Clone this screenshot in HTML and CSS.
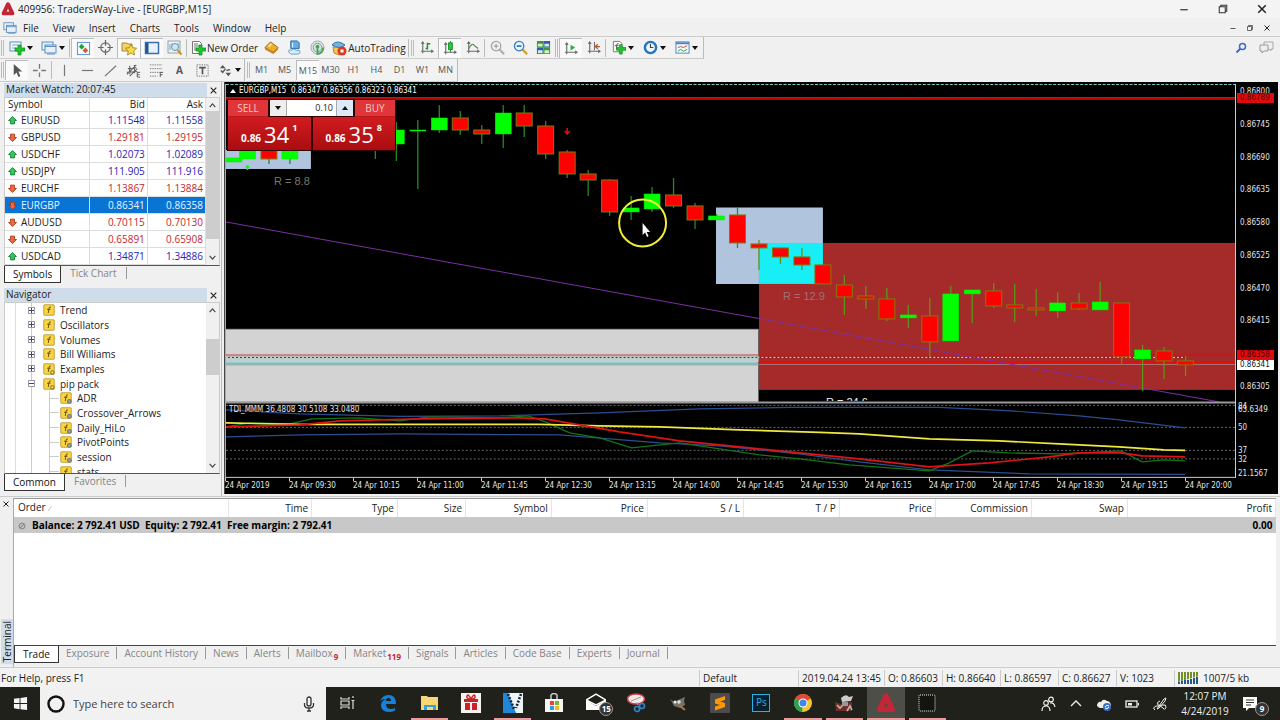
FILE: index.html
```html
<!DOCTYPE html>
<html lang="en">
<head>
<meta charset="utf-8">
<title>409956: TradersWay-Live - [EURGBP,M15]</title>
<link rel="stylesheet" href="styles.css">
</head>
<body>
<svg class="defs" aria-hidden="true">
  <symbol id="logo" viewBox="0 0 16 16"><path d="M8 2.500 13 13H3z" fill="none" stroke="#c22738" stroke-width="4.500" stroke-linejoin="round"/></symbol>
  <symbol id="plus" viewBox="0 0 16 16"><path d="M9 5h3v3h4v3h-4v4H9v-4H6V8h3z" fill="#1fc52b" stroke="#0a8a18" stroke-width=".7"/></symbol>
  <symbol id="new-chart" viewBox="0 0 16 16"><rect x="1" y="2" width="11" height="9" fill="#f3f8fc" stroke="#5a8fc0"/><path d="M3 5h6M3 8h4" stroke="#7ba6cc"/><use href="#plus"/></symbol>
  <symbol id="profiles" viewBox="0 0 16 16"><rect x="1" y="2" width="11" height="8" fill="#e8f1f9" stroke="#5a8fc0"/><rect x="4" y="5" width="11" height="8" fill="#e8f1f9" stroke="#5a8fc0"/><path d="M4 6.500h11M6 14h8" stroke="#5a8fc0"/></symbol>
  <symbol id="watch" viewBox="0 0 16 16"><rect x="1.500" y="1.500" width="13" height="13" fill="#f6fbff" stroke="#4f92c6"/><path d="m6 3 3 3-3 3-3-3z" fill="#18aa35"/><path d="m10 7 3 3-3 3-3-3z" fill="#e2582a"/></symbol>
  <symbol id="target" viewBox="0 0 16 16"><g fill="none" stroke="#666" stroke-width="1.300"><circle cx="8" cy="8" r="5"/><path d="M8 0v6M8 10v6M0 8h6M10 8h6"/></g></symbol>
  <symbol id="star" viewBox="0 0 16 16"><path d="M1 3h5l1 1h4v7H1z" fill="#f3d36a" stroke="#a98934"/><path d="m10 4 1.700 3.700 4 .5-3 2.800.8 4L10 13l-3.500 2 .8-4-3-2.800 4-.5z" fill="#ffdb4a" stroke="#a07a18" stroke-width=".8"/></symbol>
  <symbol id="panel" viewBox="0 0 16 16"><rect x="1.500" y="2.500" width="13" height="11" fill="#e9f1fa" stroke="#3971ae" stroke-width="1.500"/><path d="M3 3v10" stroke="#215796" stroke-width="3"/></symbol>
  <symbol id="tester" viewBox="0 0 16 16"><rect x="1" y="1" width="12" height="12" fill="#f0f3f5" stroke="#8da2b0"/><path d="M3 10V4M5 8V3m6 5V3" stroke="#7aa"/><circle cx="8" cy="7" r="3.500" fill="#cde6f7" stroke="#6e91ad"/><path d="m10.500 10 4 4.500" stroke="#c89423" stroke-width="2"/></symbol>
  <symbol id="order" viewBox="0 0 16 16"><path d="M2.500 1.500h7l2 2v10h-9z" fill="#fafafa" stroke="#777"/><path d="M4 4h4M4 6h5M4 8h3M4 10h2" stroke="#777"/><use href="#plus"/></symbol>
  <symbol id="book" viewBox="0 0 16 16"><path d="m1 8 6-6 8 6-5 6z" fill="#e8af33" stroke="#9c6b12"/><path d="m1 8 9 4 5-4v2l-5 5-9-5z" fill="#c5851b"/><path d="m5 7 3-3" stroke="#ffe39a" stroke-width="2"/></symbol>
  <symbol id="server" viewBox="0 0 16 16"><path d="M4 1h7l2 2v6H4z" fill="#65afe8" stroke="#256da9"/><path d="M6 3v5" stroke="#fff"/><path d="M3 14q-2-1-1-3 2-1 3 0 2-3 5 0 4-1 4 2 0 2-3 2H4z" fill="#dceefa" stroke="#569ccd"/></symbol>
  <symbol id="signal" viewBox="0 0 16 16"><circle cx="8" cy="8" r="7" fill="#dde4e4" stroke="#9caaaa"/><circle cx="8" cy="8" r="4.500" fill="none" stroke="#7d9aa0"/><circle cx="8" cy="7" r="2" fill="#45a756"/><path d="M8 8v7q6-1 6-7" fill="none" stroke="#45a756" stroke-width="2"/></symbol>
  <symbol id="auto" viewBox="0 0 16 16"><path d="M2 7h11l-1 6-4 2-5-2z" fill="#f3c84d" stroke="#b8872b"/><path d="M1 5q5-6 13 0-5 5-13 0" fill="#6cb5e5" stroke="#3777a9"/><circle cx="11" cy="11" r="4.500" fill="#d83a24"/><rect x="9.500" y="9.500" width="3" height="3" fill="#fff"/></symbol>
  <symbol id="axes" viewBox="0 0 16 16"><path d="M4 2v12M2 12h13M2.500 4 4 2l1.500 2M13 10.500l2 1.500-2 1.500" fill="none" stroke="#6a6a6a" stroke-width="1.200"/></symbol>
  <symbol id="bars" viewBox="0 0 16 16"><use href="#axes"/><path d="M9 3v7M7 9h2m0-5h3" stroke="#189432" stroke-width="1.600"/></symbol>
  <symbol id="candles" viewBox="0 0 16 16"><use href="#axes"/><path d="M9 0v12" stroke="#178f2b"/><rect x="7" y="2" width="4" height="7" fill="#20cf3b" stroke="#178f2b"/></symbol>
  <symbol id="line" viewBox="0 0 16 16"><use href="#axes"/><path d="M4 9q4-7 6-3l4 3" fill="none" stroke="#57804e" stroke-width="1.200"/></symbol>
  <symbol id="zoom-in" viewBox="0 0 16 16"><path d="m10 10 5 5" stroke="#b3b3b3" stroke-width="2.500"/><circle cx="6.500" cy="6.500" r="5" fill="#f4f4f4" stroke="#a2a2a2" stroke-width="1.400"/><path d="M4 6.500h5M6.500 4v5" stroke="#a2a2a2" stroke-width="1.400"/></symbol>
  <symbol id="zoom-out" viewBox="0 0 16 16"><path d="m10 10 5 5" stroke="#d5a42c" stroke-width="2.500"/><circle cx="6.500" cy="6.500" r="5" fill="#e3f4ff" stroke="#367bbd" stroke-width="1.400"/><path d="M4 6.500h5" stroke="#265e9c" stroke-width="1.600"/></symbol>
  <symbol id="tiles" viewBox="0 0 16 16"><path d="M1 1h7v7H1zM8 8h7v7H8z" fill="#3d973a"/><path d="M8 1h7v7H8zM1 8h7v7H1z" fill="#2860b7"/><path d="M2 4h5v3H2zm7 0h5v3H9zM2 11h5v3H2zm7 0h5v3H9z" fill="#d9efc9"/></symbol>
  <symbol id="scroll" viewBox="0 0 16 16"><use href="#axes"/><path d="m8 4 5 3-5 3z" fill="#22b43a"/></symbol>
  <symbol id="shift" viewBox="0 0 16 16"><use href="#axes"/><path d="M9 2v9" stroke="#5c5c5c"/><path d="M9 7h6M12.500 4.500 10 7l2.500 2.500" fill="none" stroke="#b5562d" stroke-width="1.400"/></symbol>
  <symbol id="indicator" viewBox="0 0 16 16"><path d="M2.500 1.500h7l2 2v9h-9z" fill="#fafafa" stroke="#777"/><path d="M8 4q-2-1-2 2v4M4 6h4" fill="none" stroke="#555"/><use href="#plus"/></symbol>
  <symbol id="clock" viewBox="0 0 16 16"><circle cx="8" cy="8" r="6" fill="#eef7ff" stroke="#2874bb" stroke-width="2.600"/><path d="M8 4v4h3" fill="none" stroke="#345" stroke-width="1.200"/></symbol>
  <symbol id="template" viewBox="0 0 16 16"><rect x="1" y="2" width="14" height="12" fill="#f4f9fd" stroke="#4787bf"/><path d="M1 3.500h14" stroke="#4787bf" stroke-width="2"/><path d="m3 8 3-1 3 1 4-2" fill="none" stroke="#b64b35"/><path d="m3 12 3-2 3 2 4-2" fill="none" stroke="#369a3d"/></symbol>
  <symbol id="cursor" viewBox="0 0 16 16"><path d="M4 1v12l3-3 2 5 2-1-2-5h4z" fill="#555"/></symbol>
  <symbol id="cross" viewBox="0 0 16 16"><path d="M8 1v5M8 10v5M1 8h5M10 8h5" stroke="#777" stroke-width="1.400"/></symbol>
  <symbol id="vline" viewBox="0 0 16 16"><path d="M8 2v12" stroke="#777" stroke-width="1.300"/></symbol>
  <symbol id="hline" viewBox="0 0 16 16"><path d="M2 8h12" stroke="#777" stroke-width="1.300"/></symbol>
  <symbol id="trend" viewBox="0 0 16 16"><path d="M2 14 14 3" stroke="#777" stroke-width="1.300"/></symbol>
  <symbol id="channel" viewBox="0 0 16 16"><path d="M1 12 11 2M4 14l8-8M2 6l9-1M1 10l11-1M4 3v9m5-10v9" stroke="#666" stroke-width="1.200"/><path d="M15 10h-3v5h3m-3-2.500h2.500" fill="none" stroke="#555"/></symbol>
  <symbol id="fibo" viewBox="0 0 16 16"><path d="M1 2h13M1 6h13M1 10h13M1 14h8" stroke="#777" stroke-dasharray="1.500 1"/><path d="M15 10h-3v5m0-2.500h2.500" fill="none" stroke="#555"/></symbol>
  <symbol id="frame" viewBox="0 0 16 16"><rect x="2" y="2" width="12" height="12" fill="none" stroke="#777" stroke-dasharray="1.500 1"/><path d="M4.500 5h7M8 5v7" stroke="#555" stroke-width="1.800"/></symbol>
  <symbol id="arrows" viewBox="0 0 16 16"><path d="m5 2 3 3.500H2zM11 14l-3-3.500h6z" fill="#555"/><path d="m3 8 2 2 3-4M9 8l4-1" fill="none" stroke="#555" stroke-width="1.500"/></symbol>
  <symbol id="up" viewBox="0 0 16 16"><path d="m8 1 7 7h-3.500v6h-7V8H1z" fill="#35c95a" stroke="#0b7c2b" stroke-width="1.500"/></symbol>
  <symbol id="down" viewBox="0 0 16 16"><path d="m8 15 7-7h-3.500V2h-7v6H1z" fill="#f0683f" stroke="#a9320c" stroke-width="1.500"/></symbol>
  <symbol id="fx" viewBox="0 0 16 16"><rect x="1" y="1" width="14" height="14" rx="1" fill="#f8d545" stroke="#b08a1a"/><path d="M10.500 4Q8.500 3 8 6l-1 6M5.500 7h4.500" fill="none" stroke="#6a4f0c" stroke-width="1.300"/></symbol>
  <symbol id="fxg" viewBox="0 0 16 16"><use href="#fx"/><circle cx="12.500" cy="12.500" r="2.300" fill="#f5df7c" stroke="#91701a" stroke-width="1.400"/></symbol>
  <symbol id="fxc" viewBox="0 0 16 16"><use href="#fx"/><circle cx="12.500" cy="12.500" r="2.600" fill="#999" stroke="#777" stroke-width="1.400"/></symbol>
  <symbol id="min" viewBox="0 0 16 16"><path d="M3 9h10" stroke="#333" stroke-width="1.600"/></symbol>
  <symbol id="restore" viewBox="0 0 16 16"><path d="M3 5h8v8H3zM5 5V3h8v8h-2" fill="none" stroke="#333" stroke-width="1.400"/></symbol>
  <symbol id="close" viewBox="0 0 16 16"><path d="m3 3 10 10M13 3 3 13" stroke="#222" stroke-width="2"/></symbol>
  <symbol id="chev-up" viewBox="0 0 16 16"><path d="m3 11 5-6 5 6" fill="none" stroke="#444" stroke-width="2"/></symbol>
  <symbol id="chev-down" viewBox="0 0 16 16"><path d="m3 5 5 6 5-6" fill="none" stroke="#444" stroke-width="2"/></symbol>
</svg>

<header class="titlebar">
  <svg class="i14"><use href="#logo"/></svg><span class="grow">409956: TradersWay-Live - [EURGBP,M15]</span>
  <button class="win" aria-label="Minimize"><svg class="i12"><use href="#min"/></svg></button>
  <button class="win" aria-label="Restore"><svg class="i12"><use href="#restore"/></svg></button>
  <button class="win" aria-label="Close"><svg class="i12"><use href="#close"/></svg></button>
</header>
<nav class="menubar">
  <svg class="i14"><use href="#profiles"/></svg>
  <button>File</button><button>View</button><button>Insert</button><button>Charts</button><button>Tools</button><button>Window</button><button>Help</button>
  <span class="grow"></span>
  <button class="child" aria-label="Minimize chart"><svg class="i8"><use href="#min"/></svg></button>
  <button class="child" aria-label="Restore chart"><svg class="i8"><use href="#restore"/></svg></button>
  <button class="child" aria-label="Close chart"><svg class="i8"><use href="#close"/></svg></button>
</nav>
<div class="toolbar">
  <div class="band">
    <i class="grip"></i>
    <button class="drop" aria-label="New chart"><svg class="i16"><use href="#new-chart"/></svg><i class="caret"></i></button>
    <button class="drop" aria-label="Profiles"><svg class="i16"><use href="#profiles"/></svg><i class="caret"></i></button>
    <i class="sep"></i>
    <button class="tool on" aria-label="Market Watch"><svg class="i15"><use href="#watch"/></svg></button>
    <button class="tool" aria-label="Data Window"><svg class="i15"><use href="#target"/></svg></button>
    <button class="tool on" aria-label="Navigator"><svg class="i16"><use href="#star"/></svg></button>
    <button class="tool on" aria-label="Terminal"><svg class="i16"><use href="#panel"/></svg></button>
    <button class="tool" aria-label="Strategy Tester"><svg class="i16"><use href="#tester"/></svg></button>
    <i class="sep"></i>
    <button class="wide"><svg class="i16"><use href="#order"/></svg>New Order</button>
    <button class="tool" aria-label="MetaEditor"><svg class="i15"><use href="#book"/></svg></button>
    <button class="tool" aria-label="Hosting"><svg class="i15"><use href="#server"/></svg></button>
    <button class="tool" aria-label="Signals"><svg class="i15"><use href="#signal"/></svg></button>
    <button class="wide"><svg class="i16"><use href="#auto"/></svg>AutoTrading</button>
    <i class="sep"></i><i class="grip thin"></i>
    <button class="tool" aria-label="Bar Chart"><svg class="i15"><use href="#bars"/></svg></button>
    <button class="tool on" aria-label="Candlesticks"><svg class="i15"><use href="#candles"/></svg></button>
    <button class="tool" aria-label="Line Chart"><svg class="i15"><use href="#line"/></svg></button>
    <i class="sep"></i>
    <button class="tool" aria-label="Zoom In"><svg class="i15"><use href="#zoom-in"/></svg></button>
    <button class="tool" aria-label="Zoom Out"><svg class="i15"><use href="#zoom-out"/></svg></button>
    <button class="tool" aria-label="Tile Windows"><svg class="i15"><use href="#tiles"/></svg></button>
    <i class="sep"></i><i class="sep"></i>
    <button class="tool on" aria-label="Auto Scroll"><svg class="i15"><use href="#scroll"/></svg></button>
    <button class="tool" aria-label="Chart Shift"><svg class="i15"><use href="#shift"/></svg></button>
    <i class="sep"></i>
    <button class="drop" aria-label="Indicators"><svg class="i15"><use href="#indicator"/></svg><i class="caret"></i></button>
    <button class="drop" aria-label="Periods"><svg class="i15"><use href="#clock"/></svg><i class="caret"></i></button>
    <button class="drop" aria-label="Templates"><svg class="i15"><use href="#template"/></svg><i class="caret"></i></button>
  </div>
  <span class="grow"></span>
  <button class="side" aria-label="Search"><svg class="i12" viewBox="0 0 16 16"><circle cx="10" cy="6" r="4" fill="#eef" stroke="#3c6cc4" stroke-width="2"/><path d="m7 9-5 5" stroke="#3c6cc4" stroke-width="2.500"/></svg></button>
  <button class="side" aria-label="Chat"><svg class="i16" viewBox="0 0 16 16"><path d="M5 2h9v7h-2v2l-2-2H5z" fill="#eee" stroke="#aaa"/><path d="M1 5h8v6H5l-2 2v-2H1z" fill="#eee" stroke="#999"/></svg></button>
</div>
<div class="toolbar">
  <div class="band">
    <i class="grip"></i>
    <button class="tool on" aria-label="Cursor"><svg class="i15"><use href="#cursor"/></svg></button>
    <button class="tool" aria-label="Crosshair"><svg class="i15"><use href="#cross"/></svg></button>
    <i class="sep"></i>
    <button class="tool" aria-label="Vertical Line"><svg class="i15"><use href="#vline"/></svg></button>
    <button class="tool" aria-label="Horizontal Line"><svg class="i15"><use href="#hline"/></svg></button>
    <button class="tool" aria-label="Trendline"><svg class="i15"><use href="#trend"/></svg></button>
    <button class="tool" aria-label="Channel"><svg class="i15"><use href="#channel"/></svg></button>
    <button class="tool" aria-label="Fibonacci"><svg class="i15"><use href="#fibo"/></svg></button>
    <button class="tool letter">A</button>
    <button class="tool" aria-label="Text Label"><svg class="i15"><use href="#frame"/></svg></button>
    <button class="drop tight" aria-label="Arrows"><svg class="i15"><use href="#arrows"/></svg><i class="caret"></i></button>
  </div>
  <div class="band frames">
    <i class="grip thin"></i>
    <button class="tool">M1</button><button class="tool">M5</button><button class="tool on">M15</button><button class="tool">M30</button><button class="tool">H1</button><button class="tool">H4</button><button class="tool">D1</button><button class="tool">W1</button><button class="tool">MN</button>
  </div>
</div>

<main class="work">
  <aside class="docks">
    <section class="dock">
      <div class="dock-title"><h2>Market Watch: 20:07:45</h2><button aria-label="Close Market Watch"><svg class="i9"><use href="#close"/></svg></button></div>
      <div class="dock-body watch-body">
        <table class="quotes">
          <colgroup><col class="c-sym"><col><col></colgroup>
          <thead><tr><th>Symbol</th><th>Bid</th><th>Ask</th></tr></thead>
          <tbody>
            <tr class="rise"><td><svg class="i9"><use href="#up"/></svg>EURUSD</td><td>1.11548</td><td>1.11558</td></tr>
            <tr class="fall"><td><svg class="i9"><use href="#down"/></svg>GBPUSD</td><td>1.29181</td><td>1.29195</td></tr>
            <tr class="rise"><td><svg class="i9"><use href="#up"/></svg>USDCHF</td><td>1.02073</td><td>1.02089</td></tr>
            <tr class="rise"><td><svg class="i9"><use href="#up"/></svg>USDJPY</td><td>111.905</td><td>111.916</td></tr>
            <tr class="fall"><td><svg class="i9"><use href="#down"/></svg>EURCHF</td><td>1.13867</td><td>1.13884</td></tr>
            <tr class="picked"><td><svg class="i9"><use href="#down"/></svg>EURGBP</td><td>0.86341</td><td>0.86358</td></tr>
            <tr class="fall"><td><svg class="i9"><use href="#down"/></svg>AUDUSD</td><td>0.70115</td><td>0.70130</td></tr>
            <tr class="fall"><td><svg class="i9"><use href="#down"/></svg>NZDUSD</td><td>0.65891</td><td>0.65908</td></tr>
            <tr class="rise"><td><svg class="i9"><use href="#up"/></svg>USDCAD</td><td>1.34871</td><td>1.34886</td></tr>
          </tbody>
        </table>
        <div class="scrollbar"><svg class="i9"><use href="#chev-up"/></svg><i class="thumb tall"></i><span class="grow"></span><svg class="i9"><use href="#chev-down"/></svg></div>
      </div>
      <div class="tabs"><button class="tab current">Symbols</button><button class="tab">Tick Chart</button></div>
    </section>
    <section class="dock fill">
      <div class="dock-title"><h2>Navigator</h2><button aria-label="Close Navigator"><svg class="i9"><use href="#close"/></svg></button></div>
      <div class="dock-body">
        <ul class="tree">
          <li><i class="box"></i><svg class="i12"><use href="#fx"/></svg>Trend</li>
          <li><i class="box"></i><svg class="i12"><use href="#fx"/></svg>Oscillators</li>
          <li><i class="box"></i><svg class="i12"><use href="#fx"/></svg>Volumes</li>
          <li><i class="box"></i><svg class="i12"><use href="#fx"/></svg>Bill Williams</li>
          <li><i class="box"></i><svg class="i12"><use href="#fxg"/></svg>Examples</li>
          <li><i class="box open"></i><svg class="i12"><use href="#fxg"/></svg>pip pack</li>
          <li class="leaf"><svg class="i12"><use href="#fxc"/></svg>ADR</li>
          <li class="leaf"><svg class="i12"><use href="#fxc"/></svg>Crossover_Arrows</li>
          <li class="leaf"><svg class="i12"><use href="#fxc"/></svg>Daily_HiLo</li>
          <li class="leaf"><svg class="i12"><use href="#fxc"/></svg>PivotPoints</li>
          <li class="leaf"><svg class="i12"><use href="#fxc"/></svg>session</li>
          <li class="leaf"><svg class="i12"><use href="#fxc"/></svg>stats</li>
        </ul>
        <div class="scrollbar"><svg class="i9"><use href="#chev-up"/></svg><span class="lead"></span><i class="thumb"></i><span class="grow"></span><svg class="i9"><use href="#chev-down"/></svg></div>
      </div>
      <div class="tabs"><button class="tab current">Common</button><button class="tab">Favorites</button></div>
    </section>
  </aside>

  <section class="chart">
    <div class="plot">
      <svg class="canvas" viewBox="226 84 1010 394" preserveAspectRatio="none">
        <path d="M226 84.500h1010" stroke="#7fc9c0" stroke-dasharray="3 1.500"/>
        <path d="M226 98.500h1010" stroke="#e00c0c" stroke-width="3"/>
        <path d="M226 99h1010" stroke="#8c0000" stroke-width="1"/>
        <rect x="226" y="150" width="85" height="19" fill="#b0c4de"/>
        <rect x="759.500" y="243" width="476.500" height="147" fill="#a52a2a"/>
        <path d="M716.500 207.500h107V243h-64v41h-43z" fill="#b0c4de"/>
        <rect x="759.500" y="243" width="64" height="41" fill="#17eef5"/>
        <rect x="226" y="329" width="533" height="73" fill="#d3d3d3"/>
        <path d="M226 329.500h533" stroke="#999"/>
        <rect x="226" y="356" width="533" height="6" fill="#c0cfcc"/>
        <path d="M226 355h533" stroke="#cd8585" stroke-width="2"/>
        <path d="M226 363.500h533" stroke="#58cccc" stroke-width="2"/>
        <path d="M226 365h533" stroke="#9ba3a3"/>
        <path d="M759 355h477" stroke="#c71616"/>
        <path d="M759 363h477" stroke="#e00c0c" stroke-width="2"/>
        <path d="M759 364.500h477" stroke="#a87878"/>
        <path d="M226 357.500h960" stroke="#333"/><path d="M226 357.500h960" stroke="#ddd" stroke-dasharray="2 2"/>
        <path d="M226 222 1220 402" stroke="#7b30a0"/>
        <g id="candles-layer"></g>
        <path d="M247.500 165v5m-2-3h4" stroke="#00ff00" stroke-width="1.500"/>
        <path d="M567.500 128v6m-2.500-3 2.500 3 2.500-3" fill="none" stroke="#e01010" stroke-width="1.500"/>
        <path d="M226 402.500h1010" stroke="#999" stroke-width="2"/>
        <path d="M226 405.500h1010M226 427.500h1010M226 450.500h1010M226 459h1010" stroke="#666" stroke-dasharray="2 2"/>
        <g fill="none" stroke-linejoin="round">
          <path stroke="#2a4f91" stroke-width="1.200" d="M226 410 300 414 400 416.500 500 416 600 413 700 409 790 407.500 940 407.500 1012 411 1080 416 1120 420 1186 428"/>
          <path stroke="#2a4f91" stroke-width="1.200" d="M226 437 300 435 400 434 560 435 610 439 660 443 720 446 800 454 860 462 930 470 1030 474 1186 474.500"/>
          <path stroke="#147414" stroke-width="1.300" d="M226 427 250 423 290 424 312 419 360 418 400 421 430 417 500 418 528 416 546 422 570 433 600 438 632 448 680 443 720 449 760 455 800 459 850 465 930 471 950 463 973 451 1010 453 1060 454 1122 451 1143 462 1165 460 1186 461"/>
          <path stroke="#f0e840" stroke-width="1.600" d="M226 423 300 424.500 540 424.500 600 426 660 427 740 430 820 432.500 860 434 930 439 1000 441 1060 444 1120 447 1165 450 1186 450.500"/>
          <path stroke="#dc1414" stroke-width="1.600" d="M226 427 300 425 340 421 420 419 520 418 545 419 580 425 620 432 680 441 740 447 820 455 860 459 930 467 990 463 1050 457 1080 453 1122 453 1143 456 1186 457"/>
        </g>
        <path d="M226 477.500h1010" stroke="#ccc"/>
        <ellipse cx="643" cy="223" rx="23.500" ry="23.500" fill="none" stroke="#f2ee35" stroke-width="2"/>
        <path d="M643 223v12l2.500-2.500 2 4.500 1.500-1-2-4h3.500z" fill="#fff"/>
      </svg>
      <p class="symbol-line"><i class="tri"></i>EURGBP,M15&nbsp; 0.86347 0.86356 0.86323 0.86341</p>
      <p class="note n1">R = 8.8</p>
      <p class="note n2">R = 12.9</p>
      <div class="clip"><p class="note n3">R = 24.6</p></div>
      <p class="ind-line">TDI_MMM 36.4808 30.5108 33.0480</p>
      <form class="ticket">
        <div class="ticket-row">
          <button type="button" class="side-btn">SELL</button>
          <div class="spin"><button type="button" aria-label="Decrease volume"><i class="caret"></i></button><input aria-label="Volume" value="0.10"><button type="button" class="more" aria-label="Increase volume"><i class="caret flip"></i></button></div>
          <button type="button" class="side-btn">BUY</button>
        </div>
        <div class="ticket-row">
          <button type="button" class="quote"><small>0.86</small><b>34</b><sup>1</sup></button>
          <button type="button" class="quote"><small>0.86</small><b>35</b><sup>8</sup></button>
        </div>
      </form>
    </div>
    <div class="prices">
      <div class="scale"><span>0.86800</span><span>0.86745</span><span>0.86690</span><span>0.86635</span><span>0.86580</span><span>0.86525</span><span>0.86470</span><span>0.86415</span><span class="gap"></span><span>0.86305</span></div>
      <div class="levels"><span class="lv-top">84</span><span class="lv-max">63.6349</span><span class="lv-50">50</span><span class="lv-37">37</span><span class="lv-32">32</span><span class="lv-min">21.1567</span></div>
      <span class="tag red t1">0.86789</span><span class="tag red t2">0.86358</span><span class="tag t3">0.86341</span>
    </div>
    <div class="times"><span>24 Apr 2019</span><span>24 Apr 09:30</span><span>24 Apr 10:15</span><span>24 Apr 11:00</span><span>24 Apr 11:45</span><span>24 Apr 12:30</span><span>24 Apr 13:15</span><span>24 Apr 14:00</span><span>24 Apr 14:45</span><span>24 Apr 15:30</span><span>24 Apr 16:15</span><span>24 Apr 17:00</span><span>24 Apr 17:45</span><span>24 Apr 18:30</span><span>24 Apr 19:15</span><span>24 Apr 20:00</span></div>
  </section>
</main>

<section class="terminal">
  <div class="spine"><button aria-label="Close Terminal"><svg class="i8"><use href="#close"/></svg></button><span>Terminal</span></div>
  <div class="term-main">
    <div class="sheet">
      <table class="orders">
        <colgroup><col class="w-order"><col class="w-time"><col class="w-type"><col class="w-size"><col class="w-type"><col class="w-num"><col class="w-num"><col class="w-num"><col class="w-num"><col class="w-num"><col class="w-num"><col></colgroup>
        <thead><tr><th>Order <i class="slash">/</i></th><th>Time</th><th>Type</th><th>Size</th><th>Symbol</th><th>Price</th><th>S / L</th><th>T / P</th><th>Price</th><th>Commission</th><th>Swap</th><th>Profit</th></tr></thead>
        <tbody><tr><td colspan="11"><svg class="i8" viewBox="0 0 16 16"><circle cx="8" cy="8" r="6" fill="#bbb" stroke="#888" stroke-width="2"/><path d="m4 12 8-8" stroke="#888" stroke-width="2"/></svg>Balance: 2 792.41 USD&nbsp; Equity: 2 792.41&nbsp; Free margin: 2 792.41</td><td>0.00</td></tr></tbody>
      </table>
    </div>
    <div class="tabs">
      <button class="tab current">Trade</button><button class="tab">Exposure</button><button class="tab">Account History</button><button class="tab">News</button><button class="tab">Alerts</button><button class="tab">Mailbox<sub>9</sub></button><button class="tab">Market<sub>119</sub></button><button class="tab">Signals</button><button class="tab">Articles</button><button class="tab">Code Base</button><button class="tab">Experts</button><button class="tab">Journal</button>
    </div>
  </div>
</section>

<footer class="status">
  <span class="grow">For Help, press F1</span><span class="s-prof">Default</span><span class="s-date">2019.04.24 13:45</span><span class="s-val">O: 0.86603</span><span class="s-val">H: 0.86640</span><span class="s-val">L: 0.86597</span><span class="s-val">C: 0.86627</span><span class="s-val">V: 1023</span>
  <span class="s-net"><svg class="net" viewBox="0 0 21 12"><path d="M0 6h21" stroke="#75902a" stroke-width="12" stroke-dasharray="2 1"/><path d="M0 10 21 4v8H0z" fill="#f2f2f2"/><path d="M1 12v-2M4 12V9M7 12V8M10 12V8M13 12V7M16 12V6M19 12V5" stroke="#20588c" stroke-width="2"/></svg>1007/5 kb</span>
</footer>

<footer class="taskbar">
  <button class="start" aria-label="Start"><svg class="i15" viewBox="0 0 16 16"><path d="M1 3l6-1v5.500H1zM8 2l7-1v6.500H8zM1 8.500h6V14l-6-1zM8 8.500h7V15l-7-1z" fill="#f5f5f5"/></svg></button>
  <div class="search"><svg class="i20" viewBox="0 0 20 20"><circle cx="10" cy="10" r="7.500" fill="none" stroke="#111" stroke-width="2.400"/></svg><input aria-label="Search" placeholder="Type here to search"><svg class="i16" viewBox="0 0 16 16"><rect x="6" y="1" width="4" height="9" rx="2" fill="none" stroke="#333" stroke-width="1.300"/><path d="M3.500 7v2q0 3 4.500 3t4.500-3V7M8 12v3M6 15h4" fill="none" stroke="#333" stroke-width="1.300"/></svg></div>
  <div class="apps">
    <button aria-label="Task View"><svg class="i16" viewBox="0 0 16 16"><path d="M2 2v2h8V2M2 14v-2h8v2M2 6h8v4H2zM14 1v2M14 5v9M12.500 5.500h3" fill="none" stroke="#ddd" stroke-width="1.200"/></svg></button>
    <button aria-label="Edge"><svg class="i20" viewBox="0 0 20 20"><path d="M2 9Q4 2 10.500 2 18 2 18 11H8q0 5 5 5 3 0 4-1.500v3Q14 19 11 19q-8 0-8-7 0-4 5-6-5 0-6 3zm6-1h5q0-3-2.500-3T8 8z" fill="#1681dc"/></svg></button>
    <button class="run" aria-label="File Explorer"><svg class="i20" viewBox="0 0 20 20"><path d="M1 3h6l1 1h10v13H1z" fill="#f7d774"/><path d="M4 17v-5h12v5h-3v-3H7v3z" fill="#3aa0dc"/></svg></button>
    <button aria-label="Gifts"><svg class="i20" viewBox="0 0 20 20"><path d="M0 0h20v20H0z" fill="#f7f3f3"/><path d="M3 6h14v3H3zm1 4h5v7H4zm7 0h5v7h-5z" fill="#c22"/><path d="M10 6Q5 6 6 3t4 3q3-6 4-3t-4 3" fill="none" stroke="#c22" stroke-width="1.500"/></svg></button>
    <button class="run" aria-label="Movie Editor"><svg class="i20" viewBox="0 0 20 20"><path d="M0 0h20v20H0z" fill="#eef3f7"/><path d="M0 0h5l8 20H0z" fill="#1f86d8"/><path d="m5 1 6 15M18 1l-5 14" stroke="#123" stroke-width="2.600" stroke-dasharray="2 1.500"/></svg></button>
    <button aria-label="Store"><svg class="i20" viewBox="0 0 20 20"><path d="M7 6V2q3-3 6 0v4" fill="none" stroke="#ccc" stroke-width="1.500"/><path d="M1 6h18v13H1z" fill="#f5f5f5"/><path d="M6 8h4v4H6z" fill="#e5482d"/><path d="M11 8h4v4h-4z" fill="#7ab52f"/><path d="M6 13h4v4H6z" fill="#2a9fe0"/><path d="M11 13h4v4h-4z" fill="#f5b81c"/></svg></button>
    <button class="mail" aria-label="Mail"><svg class="i20" viewBox="0 0 20 20"><path d="m0 7 10-6 10 6-10 5z" fill="none" stroke="#fff" stroke-width="1.500"/><path d="m0 7 10 6 10-6v10H0z" fill="#fff"/></svg><span class="badge">15</span></button>
    <button aria-label="Snipping Tool"><svg class="i20" viewBox="0 0 20 20"><ellipse cx="9" cy="6" rx="8.500" ry="5" fill="#f2e8e8" stroke="#c8424a" stroke-width="1.500"/><path d="m4 8 10-4" stroke="#999"/><path d="m10 9 1 3m3-2-2 3" stroke="#aaa"/><circle cx="10" cy="16" r="2.500" fill="none" stroke="#2e83c9" stroke-width="1.700"/><circle cx="15" cy="13" r="2.500" fill="none" stroke="#2e83c9" stroke-width="1.700"/></svg></button>
    <button aria-label="GIMP"><svg class="i20" viewBox="0 0 20 20"><path d="m2 6 4 3 4-2 7-3-1 4 1 4-5 3-6-2-2-4z" fill="#77736b"/><circle cx="7" cy="9" r="1.500" fill="#eee"/><circle cx="11" cy="9" r="1.800" fill="#ddd"/><path d="m12 13 5 4" stroke="#a87946" stroke-width="2"/></svg></button>
    <button aria-label="Sublime Text"><svg class="i20" viewBox="0 0 20 20"><rect width="20" height="20" rx="1" fill="#4b4b4b"/><path d="m15 3-10 3.500v4l5 1.500-5 1.500v4l10-3.500v-4l-5-1.500 5-1.500z" fill="#ff9800"/></svg></button>
    <button aria-label="Photoshop"><span class="ps">Ps</span></button>
    <button class="run" aria-label="Chrome"><svg class="i20" viewBox="0 0 20 20"><circle cx="10" cy="10" r="9" fill="#f4c52c"/><path d="M10 10 2.200 5.500A9 9 0 0 1 17.800 5.500z" fill="#df4b3b"/><path d="M10 10 2.200 5.500A9 9 0 0 0 9 19z" fill="#2ba152"/><circle cx="10" cy="10" r="4.500" fill="#fff"/><circle cx="10" cy="10" r="3.500" fill="#4285e8"/></svg></button>
    <button class="run" aria-label="Bandit"><svg class="i20" viewBox="0 0 20 20"><path d="M7 5q5-5 8-1l4-1-2 5-9 1z" fill="#ccc"/><path d="m1 9 6 2 11-2v9H2z" fill="#6d312d"/><path d="m3 12 3 3 3-3m4 6 3-5 2 4" stroke="#d0b0a6" stroke-width="1.600" fill="none"/><path d="M8 9h6v4H8z" fill="#999"/></svg></button>
    <button class="run live" aria-label="TradersWay"><svg class="i20"><use href="#logo"/></svg></button>
    <button class="run" aria-label="Capture"><svg class="i20" viewBox="0 0 20 20"><rect x="2" y="2" width="16" height="16" rx="1" fill="#14150f" stroke="#eee" stroke-dasharray="1 1"/></svg></button>
  </div>
  <span class="grow"></span>
  <div class="tray">
    <svg class="i16" viewBox="0 0 16 16"><g fill="none" stroke="#eee" stroke-width="1.200"><circle cx="6" cy="7" r="2.300"/><path d="M2 15q0-5 4-5t4 5"/><circle cx="11" cy="3.500" r="2.300"/><path d="M10 7q4-1 5 4"/></g></svg>
    <svg class="i16" viewBox="0 0 16 16"><path d="m3 10 5-5 5 5" fill="none" stroke="#eee" stroke-width="1.300"/></svg>
    <svg class="i16" viewBox="0 0 16 16"><path d="M2 11q-2-2 0-4 1-2 3-1 2-4 6-1 3 0 4 4 0 3-3 3H4z" fill="#eee"/><circle cx="11" cy="11" r="4" fill="#3971c5"/><path d="M9 11q2-3 4-1m0 1q-2 3-4 1" fill="none" stroke="#fff"/></svg>
    <svg class="i16" viewBox="0 0 16 16"><rect x="2" y="5" width="11" height="6" fill="none" stroke="#eee" stroke-width="1.300"/><path d="M4 7h4v2.500H4zM14 7h1v2.500h-1z" fill="#eee"/></svg>
    <svg class="i16" viewBox="0 0 16 16"><path d="M5 13 12 3l2-1-1 3-6 7zM3 14q-3-2 1-4 5-1 7 2t3-1q0-3-3-2T6 9Q4 6 8 5" fill="none" stroke="#eee"/></svg>
    <div class="time"><span>12:07 PM</span><span>4/24/2019</span></div>
    <button class="mail" aria-label="Notifications"><svg class="i16" viewBox="0 0 16 16"><path d="M1 1h14v11H7l-3 3v-3H1z" fill="#fff"/><path d="M4 4h8M4 6.500h8M4 9h5" stroke="#333"/></svg><span class="badge">9</span></button>
  </div>
</footer>
<script src="chart.js"></script>
</body>
</html>
```
FILE: styles.css
```css
* { box-sizing: border-box; }
body { margin: 0; min-height: 100vh; display: flex; flex-direction: column; background: #f0f0f0; color: #222; font: 10px/14px "Open Sans", "Noto Sans", sans-serif; overflow: hidden; }
button, input { font: inherit; color: inherit; border: 0; padding: 0; background: none; }
h2, p, ul { margin: 0; padding: 0; font-size: inherit; font-weight: 400; }
svg { flex: none; display: block; }
.defs { position: absolute; width: 0; height: 0; }
.grow { flex: 1; }
.i8 { width: 8px; height: 8px; } .i9 { width: 9px; height: 9px; } .i12 { width: 12px; height: 12px; }
.i14 { width: 14px; height: 14px; } .i15 { width: 15px; height: 15px; } .i16 { width: 16px; height: 16px; } .i20 { width: 20px; height: 20px; }

.titlebar { display: flex; align-items: center; height: 18px; padding-left: 1px; background: #f4f4f4; gap: 3px; }
.win { width: 36px; height: 18px; display: grid; place-items: center; }
.menubar { display: flex; align-items: center; height: 19px; padding: 1px 0 0 3px; border-bottom: 1px solid #ccc; }
.menubar button { margin-left: 6px; margin-right: 8px; }
.menubar .child { width: 17px; margin: 0; }

.toolbar { display: flex; align-items: center; height: 22px; }
.toolbar + .toolbar { height: 23px; }
.band { display: flex; align-items: center; align-self: stretch; border-right: 1px solid #bbb; border-bottom: 1px solid #ccc; background: #f2f2f2; }
.toolbar button { display: flex; align-items: center; justify-content: center; height: 20px; }
.grip { width: 3px; height: 16px; margin: 0 1px; border-left: 1px solid #bbb; border-right: 1px solid #bbb; }
.sep { width: 1px; height: 18px; margin-right: 1px; background: #bbb; }
.toolbar .tool { width: 23px; }
.tool.on { background: #fafafa; border-left: 1px solid #bbb; border-top: 1px solid #bbb; }
.drop { width: 32px; gap: 2px; }
.drop.tight { width: 30px; }
.wide { gap: 1px; padding: 0 2px; white-space: nowrap; }
.side { width: 26px; }
.caret { border: 3px solid transparent; border-top: 4px solid #111; border-bottom: 0; }
.caret.flip { transform: rotate(180deg); }
.letter { font-weight: 700; color: #555; }
.frames { margin-left: 1px; color: #555; font-size: 9px; }
.frames .grip { margin: 0 0 0 1px; }

.work { display: flex; flex: 416 1 0; min-height: 0; }
.docks { display: flex; flex-direction: column; width: 222px; padding: 1px 1px 0 4px; gap: 5px; border-right: 1px solid #bbb; }
.dock { display: flex; flex-direction: column; }
.dock.fill { flex: 1; min-height: 0; padding-bottom: 5px; }
.dock-title { display: flex; height: 14px; }
.dock-title h2 { flex: 1; padding-left: 2px; background: #cfdcea; line-height: 13px; }
.dock-title button { width: 13px; display: grid; place-items: center; }
.dock-body { display: flex; background: #fff; border: 1px solid #ccc; border-bottom: 1px solid #555; min-height: 0; }
.watch-body { height: 169px; align-items: flex-start; }
.watch-body .scrollbar { align-self: stretch; }
.dock.fill .dock-body { flex: 1; overflow: hidden; }
.quotes { flex: 1; height: 167px; table-layout: fixed; border-collapse: collapse; }
.c-sym { width: 42%; }
.quotes th, .quotes td { padding: 0 2px 0 0; border-right: 1px solid #ddd; border-bottom: 1px solid #ddd; text-align: right; font-weight: 400; line-height: 13px; }
.quotes th:first-child, .quotes td:first-child { text-align: left; padding-left: 3px; }
.quotes td svg { display: inline-block; margin-right: 4px; vertical-align: -1px; }
.rise td + td { color: #2a22b5; } .fall td + td { color: #c3272e; }
.picked { background: #0a74d4; color: #e8f4ff; }
.scrollbar { display: flex; flex-direction: column; align-items: center; width: 13px; padding: 3px 0; gap: 2px; background: #f0f0f0; }
.thumb { width: 13px; height: 36px; background: #cdcdcd; } .thumb.tall { height: 128px; margin-top: -1px; }
.lead { height: 20px; }
.tabs { display: flex; height: 17px; color: #858585; }
.tab { position: relative; height: 14px; padding: 0 9px; }
.tab.current { height: 17px; padding: 0 8px; color: #111; background: #fff; border: 1px solid #333; border-top: 0; }
.tab:not(.current) { border-right: 1px solid #999; margin-top: 1px; height: 12px; line-height: 12px; }
.tree { flex: 1; height: 176px; display: grid; grid-template-rows: repeat(12, 1fr); list-style: none; background: linear-gradient(90deg, transparent 10px, #ddd 10px, #ddd 11px, transparent 11px, transparent 26px, #ccc 26px, #ccc 27px, transparent 27px); }
.tree li { display: flex; align-items: center; padding-left: 23px; gap: 5px; }
.tree .leaf { padding-left: 55px; background: linear-gradient(90deg, transparent 44px, #ccc 44px, #ccc 45px, transparent 45px), linear-gradient(#ccc, #ccc) 45px 50%/9px 1px no-repeat; }
.box { width: 7px; height: 7px; border: 1px solid #99a; background: linear-gradient(#446, #446) center/5px 1px no-repeat, linear-gradient(#446, #446) center/1px 5px no-repeat, #fff; margin-right: 3px; }
.box.open { background: linear-gradient(#446, #446) center/5px 1px no-repeat, #fff; }

.chart { flex: 1; display: grid; grid-template-columns: 1fr 42px; grid-template-rows: 1fr 16px; margin: 0 2px 2px 2px; padding-top: 2px; background: #000; border-left: 1px solid #444; color: #e4e4e4; font-family: "DejaVu Sans Condensed", "Open Sans", sans-serif; font-size: 8px; line-height: 12px; }
.plot { position: relative; min-height: 0; border-left: 1px solid #aaa; border-right: 1px solid #ccc; }
.canvas { position: absolute; inset: 0; width: 100%; height: 100%; }
.symbol-line { position: absolute; left: 4px; top: 1px; display: flex; align-items: center; gap: 3px; color: #fff; white-space: pre; }
.tri { border: 3px solid transparent; border-bottom: 4px solid #fff; border-top: 0; }
.note { position: absolute; color: #777; font: 11px/12px "Liberation Sans", sans-serif; white-space: nowrap; }
.n1 { left: 48px; top: 91px; } .n2 { left: 557px; top: 206px; color: #a07070; }
.clip { position: absolute; left: 600px; top: 300px; width: 60px; height: 17px; overflow: hidden; }
.n3 { left: 0; top: 12px; color: #eee; }
.ind-line { position: absolute; left: 3px; top: 320px; }
.ticket { position: absolute; left: 1px; top: 15px; width: 169px; padding: 1px; display: grid; grid-template-columns: minmax(0, 1fr); background: #300; color: #fff; font-family: "Open Sans", sans-serif; }
.ticket-row { display: flex; gap: 2px; }
.side-btn { width: 40px; height: 17px; background: #e0363a; color: #f6c9c9; border-bottom: 1px solid #b91a1e; font-size: 10px; }
.spin { flex: 1; min-width: 0; display: flex; height: 16px; background: #fff; }
.spin button { width: 16px; display: grid; place-items: center; background: #eee; }
.spin .more { background: #dbe9f8; }
.spin input { flex: 1; min-width: 0; padding-right: 3px; text-align: right; font-size: 9px; color: #222; border-left: 1px solid #aaa; border-right: 1px solid #aaa; }
.quote { flex: 1; height: 33px; display: flex; align-items: center; justify-content: center; gap: 3px; background: linear-gradient(#d11c20, #a90d10); }
.quote small { font-size: 10px; font-weight: 700; padding-top: 9px; }
.quote b { font-size: 22px; font-weight: 400; }
.quote sup { font-size: 9px; font-weight: 700; padding-bottom: 12px; }
.prices { position: relative; display: grid; grid-template-rows: 318fr 76fr; padding-left: 4px; }
.scale { display: flex; flex-direction: column; justify-content: space-between; padding: 2px 0 9px; }
.scale span { height: 12px; }
.levels span { position: absolute; left: 2px; }
.lv-top { top: 317px; } .lv-max { top: 320px; } .lv-50 { top: 338px; } .lv-37 { top: 361px; } .lv-32 { top: 370px; } .lv-min { top: 384px; }
.tag { position: absolute; left: 1px; width: 37px; height: 10px; padding-left: 3px; line-height: 10px; background: #fff; color: #111; }
.tag.red { background: #e00c0c; color: #500; }
.t1 { top: 9px; } .t2 { top: 266px; } .t3 { top: 276px; }
.times { grid-column: 1 / 3; display: grid; grid-template-columns: repeat(16, 1fr); padding-right: 29px; white-space: nowrap; }
.times span { background: linear-gradient(#ccc, #ccc) 0 0/1px 3px no-repeat; line-height: 16px; }

.terminal { display: flex; flex: 170 1 0; min-height: 0; border-top: 1px solid #ccc; padding: 1px 4px 0 0; }
.spine { display: flex; flex-direction: column; justify-content: space-between; align-items: center; width: 14px; padding: 2px 0 3px; border-right: 1px solid #aaa; }
.spine span { writing-mode: vertical-rl; transform: rotate(180deg); background: #cfdcea; width: 12px; line-height: 12px; padding: 2px 0; }
.spine button { width: 10px; height: 8px; }
.term-main { flex: 1; display: flex; flex-direction: column; min-width: 0; }
.sheet { flex: 1; background: #fff; border-top: 1px solid #999; border-bottom: 1px solid #444; }
.orders { width: 100%; table-layout: fixed; border-collapse: collapse; }
.orders th { height: 18px; padding: 0 3px 0 0; text-align: right; font-weight: 400; border-right: 1px solid #e5e5e5; }
.orders th:first-child, .orders td:first-child { text-align: left; padding-left: 4px; }
.orders td { height: 16px; padding: 0 3px 0 0; text-align: right; font-weight: 700; background: #c8c8c8; color: #000; line-height: 14px; }
.orders td svg { display: inline-block; margin-right: 6px; vertical-align: -1px; }
.slash { color: #aaa; font-size: 8px; }
.w-order { width: 17%; } .w-time { width: 6.600%; } .w-type { width: 6.800%; } .w-size { width: 5.400%; } .w-num { width: 7.610%; }
.terminal .tabs { height: 21px; }
.terminal .tab:not(.current) { padding: 0 7px; }
.tab sub { color: #d3202c; font-size: 8px; font-weight: 700; vertical-align: -3px; line-height: 1px; margin-left: 1px; }

.status { display: flex; align-items: center; height: 20px; border-top: 1px solid #ccc; background: #f2f2f2; padding-left: 1px; }
.status span + span { border-left: 1px solid #ccc; padding-left: 3px; line-height: 16px; white-space: nowrap; }
.s-prof { width: 99px; } .s-date { width: 86px; } .s-val { width: 58px; }
.status .s-net { display: flex; align-items: center; gap: 4px; width: 106px; }
.net { width: 21px; height: 12px; }

.taskbar { display: flex; height: 33px; background: #20211a; color: #eee; }
.start { width: 40px; display: grid; place-items: center; }
.search { display: flex; align-items: center; width: 286px; padding: 0 9px 0 6px; gap: 7px; background: #f1f1f1; }
.search input { flex: 1; min-width: 0; font-size: 11px; }
.search input::placeholder { color: #444; opacity: 1; }
.apps { display: grid; grid-template-columns: repeat(15, 1fr); flex: 0 1 618px; column-gap: 4px; margin-left: 2px; }
.apps button { position: relative; display: grid; place-items: center; border-bottom: 2px solid transparent; padding-top: 1px; }
.apps .run { border-color: #eb9a9e; } .apps .live { background: #4d4e47; }
.mail { position: relative; }
.badge { position: absolute; right: 1px; bottom: 2px; min-width: 14px; height: 14px; border: 1px solid #999; border-radius: 50%; background: #333; color: #fff; font-size: 8px; font-weight: 700; line-height: 12px; text-align: center; }
.ps { width: 18px; height: 18px; border: 1px solid #26b4e8; background: #06202f; color: #26b4e8; line-height: 15px; text-align: center; }
.tray { display: flex; align-items: center; gap: 12px; }
.time { display: flex; flex-direction: column; text-align: center; width: 50px; line-height: 15px; white-space: nowrap; }
.tray .mail { width: 34px; height: 33px; display: grid; place-items: center start; margin-right: 4px; }
.tray .badge { right: 7px; bottom: 4px; }
```
FILE: chart.js
```js
// centre x, body top, body bottom, high, low, up/down
const bars = [
  [234, 158, 162, 158, 162, 1], [247.5, 150, 159, 150, 159, 1], [269, 150, 159, 150, 164, 0], [290, 150, 159, 150, 164, 1],
  [375.5, 130, 140, 130, 159, 1], [396.5, 130, 144, 122, 161, 1], [418, 130, 131, 120, 189, 1], [439.5, 118, 130, 105, 133, 1],
  [460.5, 118, 130, 111, 135, 0], [482, 130, 134, 125, 144, 0], [503.5, 113, 134, 105, 148, 1], [524.5, 113, 126, 105, 137, 0],
  [546, 126, 154, 121, 159, 0], [567.5, 152, 174, 150, 178, 0], [588.5, 174, 180, 170, 196, 0], [610, 180, 212, 179, 216, 0],
  [631.5, 208, 212, 196, 220, 1], [652.5, 194, 209, 187, 212, 1], [674, 195, 206, 178, 208, 0], [695.5, 206, 220, 203, 229, 0],
  [717, 216, 220, 214, 220, 1], [738, 215, 243, 208, 248, 0], [759.5, 244, 248, 240, 270, 0], [781, 248, 257, 248, 264, 0],
  [802.5, 257, 265, 248, 270, 0], [823.5, 265, 284, 265, 284, 0], [845, 285, 297, 275, 315, 0], [866.5, 296, 299, 286, 309, 0],
  [887.5, 299, 319, 288, 321, 0], [909, 315, 318, 305, 328, 1], [930.5, 316, 342, 298, 357, 0], [951.5, 294, 341, 286, 341, 1],
  [973, 290, 294, 290, 323, 1], [994.5, 291, 306, 283, 308, 0], [1015.5, 305, 308, 284, 322, 0], [1037, 308, 310, 289, 316, 0],
  [1058.5, 303, 311, 292, 318, 1], [1080, 303, 309, 293, 310, 0], [1101, 302, 310, 282, 310, 1], [1122.5, 303, 357, 303, 365, 0],
  [1143.5, 350, 359, 345, 391, 1], [1165, 351, 361, 347, 379, 0], [1186.5, 361, 365, 356, 376, 0]
];
const ns = "http://www.w3.org/2000/svg";
const layer = document.getElementById("candles-layer");
function add(tag, attrs) {
  const node = document.createElementNS(ns, tag);
  for (const key in attrs) node.setAttribute(key, attrs[key]);
  layer.appendChild(node);
}
for (const [x, top, bottom, high, low, up] of bars) {
  add("path", { d: `M${x} ${high}V${low}`, stroke: x > 759 ? "#5f9416" : "#258b25", "stroke-width": 1.3 });
  add("rect", { x: x - 8, y: top, width: 16, height: bottom - top, fill: up ? "#00ff00" : "#ff0000", stroke: up ? "#00e800" : "#7d7b10", "stroke-width": up ? 0.5 : 1 });
}
```
